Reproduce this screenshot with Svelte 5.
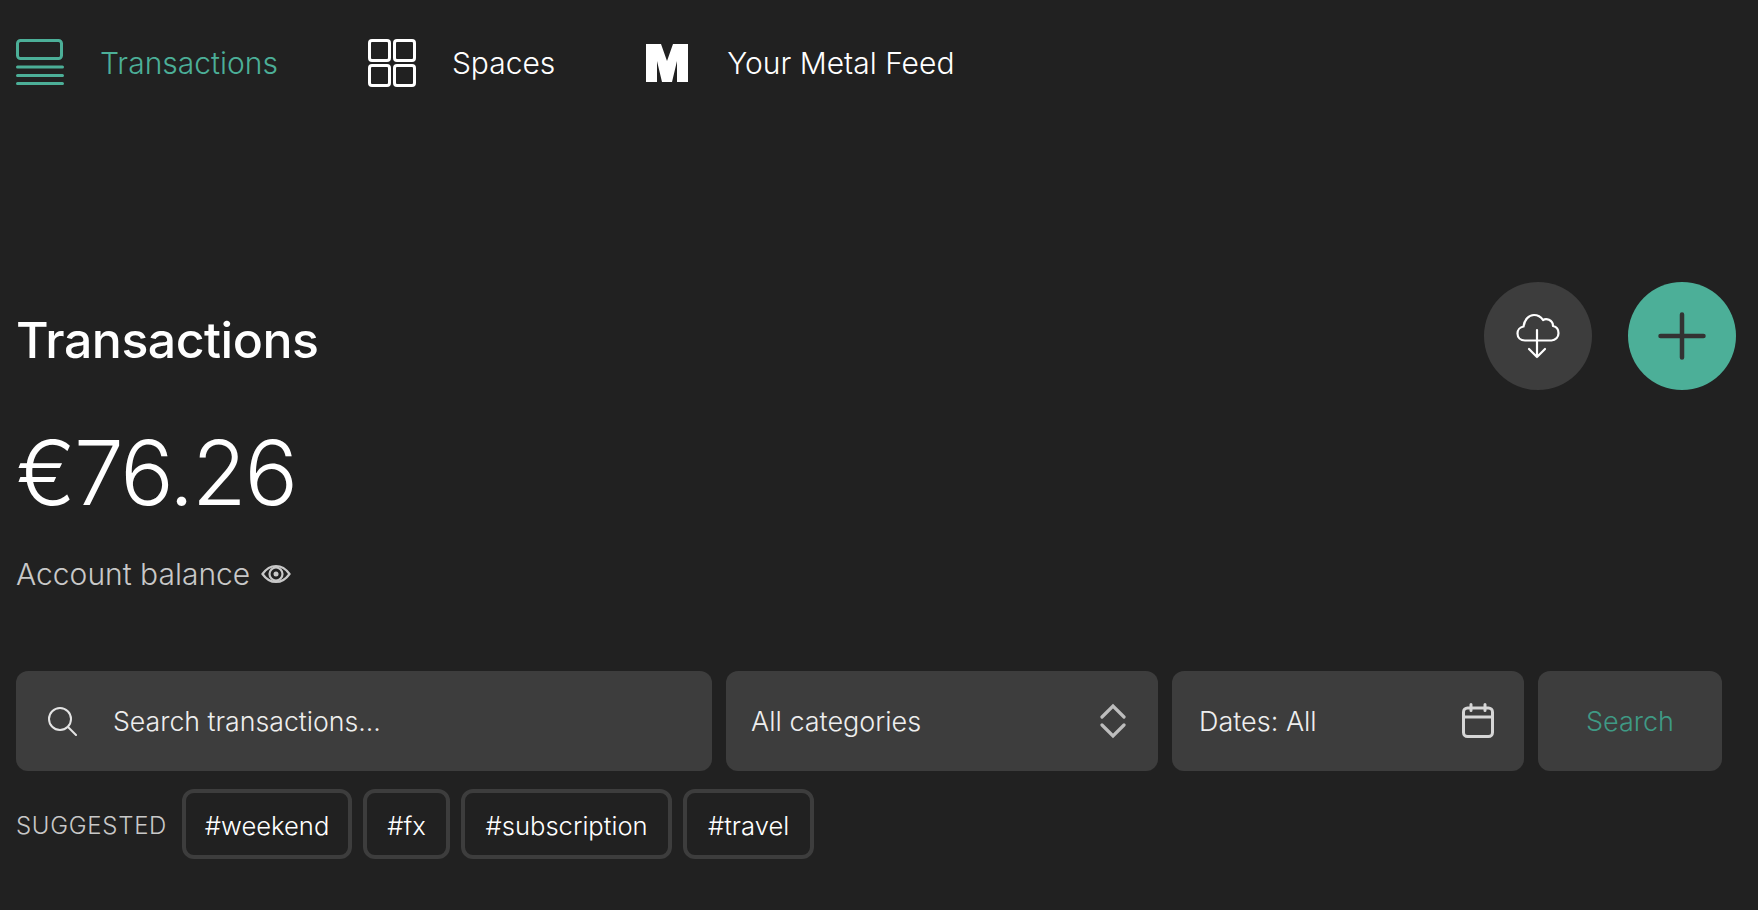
<script>
	const navItems = [
		{ label: 'Transactions', icon: 'list', active: true },
		{ label: 'Spaces', icon: 'grid' },
		{ label: 'Your Metal Feed', icon: 'metal' }
	];
	const tags = [
		{ name: '#weekend', width: 170 },
		{ name: '#fx', width: 87 },
		{ name: '#subscription', width: 211 },
		{ name: '#travel', width: 131 }
	];
</script>

<div class="page">
	<nav class="nav">
		{#each navItems as item}
			<div class="nav-item" class:active={item.active} class:metal={item.icon === 'metal'}>
				{#if item.icon === 'list'}
					<svg width="48" height="48" viewBox="0 0 48 48" fill="none" stroke="currentColor" stroke-width="3" stroke-linecap="round">
						<rect x="1.500" y="1.500" width="44" height="18" rx="3" />
						<path d="M1.500 28h45M1.500 36.500h45M1.500 44.500h45" />
					</svg>
				{:else if item.icon === 'grid'}
					<svg width="48" height="48" viewBox="0 0 48 48" fill="none" stroke="currentColor" stroke-width="3">
						<rect x="1.500" y="1.500" width="20" height="20" rx="2.500" />
						<rect x="26.500" y="1.500" width="20" height="20" rx="2.500" />
						<rect x="1.500" y="26.500" width="20" height="20" rx="2.500" />
						<rect x="26.500" y="26.500" width="20" height="20" rx="2.500" />
					</svg>
				{:else}
					<svg width="42" height="38" viewBox="0 0 42 38" fill="currentColor">
						<path d="M0 0h15l6 17 6-17h15v38H31V17l-5 21H16L11 17v21H0z" />
					</svg>
				{/if}
				<span>{item.label}</span>
			</div>
		{/each}
	</nav>

	<section class="head">
		<div>
			<h1>Transactions</h1>
			<div class="amount">€76.26</div>
			<div class="balance">
				<span>Account balance</span>
				<svg width="30" height="22" viewBox="0 0 30 22" fill="none" stroke="currentColor" stroke-width="2.200">
					<path d="M1.500 11c3.500-5 8-8 13.500-8s10 3 13.500 8c-3.500 5-8 8-13.500 8s-10-3-13.500-8z" />
					<circle cx="15" cy="11" r="6.500" />
					<circle cx="15" cy="11" r="2.500" fill="currentColor" stroke="none" />
				</svg>
			</div>
		</div>
		<div class="actions">
			<button class="round dark" type="button" aria-label="Download">
				<svg width="44" height="46" viewBox="0 0 44 46" fill="none" stroke="#fff" stroke-width="2.200" stroke-linecap="round" stroke-linejoin="round">
					<path d="M9 27.500C4.500 27.500 1.500 24.500 1.500 20.500c0-3.500 2.500-6.500 6-7C8.500 7 12.500 2 18 2c4 0 7 2 9 5 1.500-1 4-1.200 6-.2 2.500 1.200 4 3.500 4 6.200 3.500.8 5.500 3.800 5.500 7.200 0 4-3 7.300-7 7.300z" />
					<path d="M21 17v27M13 36l8 8 8-8" />
				</svg>
			</button>
			<button class="round teal" type="button" aria-label="Add">
				<svg width="48" height="48" viewBox="0 0 48 48" fill="none" stroke="#333" stroke-width="4.500" stroke-linecap="round">
					<path d="M24 2.500v43M2.500 24h43" />
				</svg>
			</button>
		</div>
	</section>

	<div class="filters">
		<div class="field search">
			<svg width="30" height="30" viewBox="0 0 30 30" fill="none" stroke="#e4e4e4" stroke-width="2" stroke-linecap="round">
				<circle cx="13" cy="13" r="11" />
				<path d="M21 21l8 8" />
			</svg>
			<span>Search transactions...</span>
		</div>
		<div class="field cats">
			<span>All categories</span>
			<svg width="26" height="36" viewBox="0 0 26 36" fill="none" stroke="#bdbdbd" stroke-width="3.200" stroke-linecap="round">
				<path d="M2 14L13 3l11 11M2 22l11 11 11-11" />
			</svg>
		</div>
		<div class="field dates">
			<span>Dates: All</span>
			<svg width="32" height="36" viewBox="0 0 32 36" fill="none" stroke="#d6d6d6" stroke-width="3" stroke-linecap="round">
				<rect x="1.500" y="5" width="29" height="28.500" rx="4" />
				<path d="M1.500 14h29M9 1.500v6M23 1.500v6" />
			</svg>
		</div>
		<button class="field go" type="button">Search</button>
	</div>

	<div class="suggested">
		<span class="label">SUGGESTED</span>
		<div class="tags">
			{#each tags as tag}
				<span class="tag" style="width: {tag.width}px">{tag.name}</span>
			{/each}
		</div>
	</div>
</div>

<style>
	:global(body) {
		background: #212121;
	}
	.page {
		height: 910px;
		box-sizing: border-box;
		padding: 39px 22px 0 16px;
		background: #212121;
		color: #fff;
		font-family: Inter, 'Noto Sans', sans-serif;
		font-weight: 300;
		overflow: hidden;
	}
	.nav {
		display: flex;
		align-items: center;
		height: 48px;
	}
	.nav-item {
		display: flex;
		align-items: center;
		gap: 36px;
		margin-right: 90px;
		font-size: 30px;
	}
	.nav-item.metal {
		gap: 39px;
		margin-left: 1px;
	}
	.nav-item.active {
		color: #4caf98;
	}
	.head {
		display: flex;
		justify-content: space-between;
		align-items: flex-start;
		margin-top: 195px;
	}
	h1 {
		margin: 0;
		padding-top: 18px;
		font-size: 50px;
		line-height: 80px;
		font-weight: 500;
		letter-spacing: -0.5px;
	}
	.amount {
		margin-top: 43px;
		font-size: 89px;
		line-height: 100px;
		font-weight: 300;
		letter-spacing: -2px;
	}
	.balance {
		display: flex;
		align-items: center;
		gap: 11px;
		margin-top: 31px;
		font-size: 30px;
		line-height: 40px;
		color: #c8c8c8;
	}
	.actions {
		display: flex;
		gap: 36px;
	}
	.round {
		width: 108px;
		height: 108px;
		border: 0;
		border-radius: 50%;
		padding: 0;
		display: grid;
		place-items: center;
	}
	.round.dark {
		background: #3d3d3d;
	}
	.round.teal {
		background: #4caf98;
	}
	.filters {
		display: flex;
		gap: 14px;
		margin-top: 77px;
	}
	.field {
		height: 100px;
		box-sizing: border-box;
		border: 0;
		border-radius: 12px;
		background: #3d3d3d;
		display: flex;
		align-items: center;
		color: #eee;
		font: inherit;
		font-size: 27px;
	}
	.search {
		width: 696px;
		padding-left: 31px;
		gap: 36px;
		font-size: 26.700px;
	}
	.cats {
		width: 432px;
		padding: 0 32px 0 25px;
		justify-content: space-between;
	}
	.dates {
		width: 352px;
		padding: 0 30px 0 27px;
		justify-content: space-between;
	}
	.go {
		width: 184px;
		justify-content: center;
		color: #3f9a85;
	}
	.suggested {
		display: flex;
		align-items: center;
		gap: 15px;
		margin-top: 18px;
	}
	.label {
		padding-top: 3px;
		font-size: 24px;
		letter-spacing: 0.7px;
		color: #c8c8c8;
	}
	.tags {
		display: flex;
		gap: 11px;
	}
	.tag {
		height: 70px;
		box-sizing: border-box;
		display: flex;
		align-items: center;
		justify-content: center;
		padding-top: 3px;
		border: 4px solid #3d3d3d;
		border-radius: 12px;
		font-size: 25.600px;
	}
</style>
